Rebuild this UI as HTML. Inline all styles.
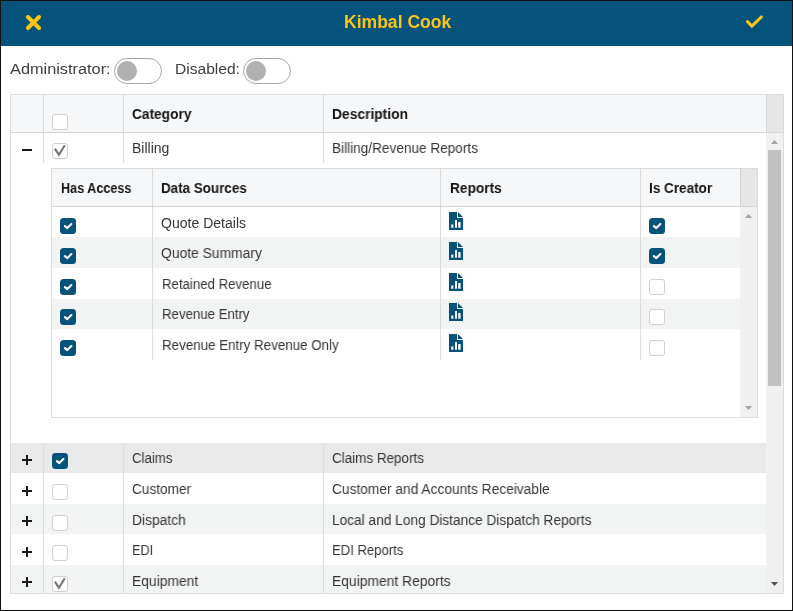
<!DOCTYPE html>
<html><head><meta charset="utf-8">
<style>
*{box-sizing:border-box;margin:0;padding:0}
html,body{width:793px;height:611px;overflow:hidden;background:#fff}
body{font-family:"Liberation Sans",sans-serif;color:#333;position:relative}
.a{position:absolute}
.t{position:absolute;white-space:nowrap;line-height:20px;height:20px;transform-origin:0 0;will-change:transform}
.tog{position:absolute;width:48px;height:26px;border:1px solid #a8a8a8;border-radius:13px;background:#fff}
.knob{position:absolute;left:2px;top:2px;width:20px;height:20px;border-radius:10px;background:#b1b1b1}
.cb{width:16px;height:16px;border:1px solid #d0d0d0;border-radius:3px;background:#fff}
.cbk{width:16px;height:16px;border-radius:3.5px;background:#05527a}
svg{display:block;position:absolute;left:0;top:0}
</style></head><body>
<div class="a" style="left:0px;top:0px;width:793px;height:611px;background:transparent;border:1px solid #111"></div>
<div class="a" style="left:1px;top:1px;width:791px;height:45px;background:#05527a;"></div>
<svg style="left:26px;top:15px" width="15" height="15" viewBox="0 0 15 15"><path d="M2 2L13 13M13 2L2 13" stroke="#fcc419" stroke-width="3.9" stroke-linecap="round"/></svg>
<svg style="left:745px;top:14px" width="19" height="16" viewBox="0 0 19 16"><path d="M2.5 7.6L6.9 12.1L16.3 3.0" stroke="#fcc419" stroke-width="3.1" stroke-linecap="round" fill="none"/></svg>
<div class="tog" style="left:114px;top:58px"><div class="knob"></div></div>
<div class="tog" style="left:243px;top:58px"><div class="knob"></div></div>
<div class="a" style="left:10px;top:94px;width:774px;height:500px;background:#fff;border:1px solid #dcdcdc"></div>
<div class="a" style="left:11px;top:95px;width:755px;height:37px;background:#f6f7f9;"></div>
<div class="a" style="left:767px;top:95px;width:16px;height:37px;background:#e7e6e7;"></div>
<div class="a" style="left:11px;top:132px;width:772px;height:1px;background:#d6d6d6;"></div>
<div class="a" style="left:43px;top:95px;width:1px;height:37px;background:#dcdcdc;"></div>
<div class="a" style="left:123px;top:95px;width:1px;height:37px;background:#dcdcdc;"></div>
<div class="a" style="left:323px;top:95px;width:1px;height:37px;background:#dcdcdc;"></div>
<div class="a" style="left:766px;top:95px;width:1px;height:37px;background:#d2d2d2;"></div>
<div class="a cb" style="left:52px;top:114px"></div>
<div class="a" style="left:766px;top:133px;width:17px;height:460px;background:#f0f0f0;"></div>
<svg style="left:771px;top:140px" width="7" height="4" viewBox="0 0 7 4"><path d="M0 4L3.5 0L7 4Z" fill="#a3a3a3"/></svg>
<div class="a" style="left:768px;top:150px;width:13px;height:236px;background:#c1c1c1;"></div>
<svg style="left:771px;top:582px" width="7" height="4" viewBox="0 0 7 4"><path d="M0 0L3.5 4L7 0Z" fill="#505050"/></svg>
<div class="a" style="left:43px;top:133px;width:1px;height:30px;background:#dcdcdc;"></div>
<div class="a" style="left:123px;top:133px;width:1px;height:30px;background:#dcdcdc;"></div>
<div class="a" style="left:323px;top:133px;width:1px;height:30px;background:#dcdcdc;"></div>
<div class="a" style="left:22px;top:149px;width:10px;height:2px;background:#1a1a1a;"></div>
<div class="a cb" style="left:52px;top:143px"><svg width="16" height="16" viewBox="0 0 16 16"><path d="M1.9 4.6L5.9 10.7L11.8 1.2" stroke="#767676" stroke-width="2.1" fill="none"/></svg></div>
<div class="a" style="left:51px;top:168px;width:707px;height:250px;background:#fff;border:1px solid #dcdcdc"></div>
<div class="a" style="left:52px;top:169px;width:689px;height:37px;background:#f6f7f9;"></div>
<div class="a" style="left:741px;top:169px;width:16px;height:37px;background:#e7e6e7;"></div>
<div class="a" style="left:52px;top:206px;width:705px;height:1px;background:#d6d6d6;"></div>
<div class="a" style="left:152px;top:169px;width:1px;height:37px;background:#dcdcdc;"></div>
<div class="a" style="left:440px;top:169px;width:1px;height:37px;background:#dcdcdc;"></div>
<div class="a" style="left:640px;top:169px;width:1px;height:37px;background:#dcdcdc;"></div>
<div class="a" style="left:740px;top:169px;width:1px;height:37px;background:#d2d2d2;"></div>
<div class="a" style="left:740px;top:207px;width:17px;height:210px;background:#f0f0f0;"></div>
<svg style="left:745px;top:214px" width="7" height="4" viewBox="0 0 7 4"><path d="M0 4L3.5 0L7 4Z" fill="#a3a3a3"/></svg>
<svg style="left:745px;top:406px" width="7" height="4" viewBox="0 0 7 4"><path d="M0 0L3.5 4L7 0Z" fill="#a3a3a3"/></svg>
<div class="a" style="left:52px;top:237px;width:688px;height:30.6px;background:#f2f3f3;"></div>
<div class="a" style="left:52px;top:298.7px;width:688px;height:30.3px;background:#f2f3f3;"></div>
<div class="a cbk" style="left:60px;top:218px"><svg width="16" height="16" viewBox="0 0 16 16"><path d="M4.9 8.1L7.3 10.1L11.4 6.0" stroke="#fff" stroke-width="2.1" fill="none" stroke-linecap="round" stroke-linejoin="round"/></svg></div>
<svg class="ic" style="left:449px;top:212px" width="14" height="18" viewBox="0 0 14 18"><path d="M0 0H8V6H14V18H0Z M2.2 12.4V15.8H4.4V12.4Z M6 8.1V15.8H8V8.1Z M9.2 10V15.8H11.6V10Z" fill="#05527a" fill-rule="evenodd"/><path d="M9 0L14 5H9Z" fill="#05527a"/></svg>
<div class="a cbk" style="left:649px;top:218px"><svg width="16" height="16" viewBox="0 0 16 16"><path d="M4.9 8.1L7.3 10.1L11.4 6.0" stroke="#fff" stroke-width="2.1" fill="none" stroke-linecap="round" stroke-linejoin="round"/></svg></div>
<div class="a cbk" style="left:60px;top:248px"><svg width="16" height="16" viewBox="0 0 16 16"><path d="M4.9 8.1L7.3 10.1L11.4 6.0" stroke="#fff" stroke-width="2.1" fill="none" stroke-linecap="round" stroke-linejoin="round"/></svg></div>
<svg class="ic" style="left:449px;top:242px" width="14" height="18" viewBox="0 0 14 18"><path d="M0 0H8V6H14V18H0Z M2.2 12.4V15.8H4.4V12.4Z M6 8.1V15.8H8V8.1Z M9.2 10V15.8H11.6V10Z" fill="#05527a" fill-rule="evenodd"/><path d="M9 0L14 5H9Z" fill="#05527a"/></svg>
<div class="a cbk" style="left:649px;top:248px"><svg width="16" height="16" viewBox="0 0 16 16"><path d="M4.9 8.1L7.3 10.1L11.4 6.0" stroke="#fff" stroke-width="2.1" fill="none" stroke-linecap="round" stroke-linejoin="round"/></svg></div>
<div class="a cbk" style="left:60px;top:279px"><svg width="16" height="16" viewBox="0 0 16 16"><path d="M4.9 8.1L7.3 10.1L11.4 6.0" stroke="#fff" stroke-width="2.1" fill="none" stroke-linecap="round" stroke-linejoin="round"/></svg></div>
<svg class="ic" style="left:449px;top:273px" width="14" height="18" viewBox="0 0 14 18"><path d="M0 0H8V6H14V18H0Z M2.2 12.4V15.8H4.4V12.4Z M6 8.1V15.8H8V8.1Z M9.2 10V15.8H11.6V10Z" fill="#05527a" fill-rule="evenodd"/><path d="M9 0L14 5H9Z" fill="#05527a"/></svg>
<div class="a cb" style="left:649px;top:279px"></div>
<div class="a cbk" style="left:60px;top:309px"><svg width="16" height="16" viewBox="0 0 16 16"><path d="M4.9 8.1L7.3 10.1L11.4 6.0" stroke="#fff" stroke-width="2.1" fill="none" stroke-linecap="round" stroke-linejoin="round"/></svg></div>
<svg class="ic" style="left:449px;top:303px" width="14" height="18" viewBox="0 0 14 18"><path d="M0 0H8V6H14V18H0Z M2.2 12.4V15.8H4.4V12.4Z M6 8.1V15.8H8V8.1Z M9.2 10V15.8H11.6V10Z" fill="#05527a" fill-rule="evenodd"/><path d="M9 0L14 5H9Z" fill="#05527a"/></svg>
<div class="a cb" style="left:649px;top:309px"></div>
<div class="a cbk" style="left:60px;top:340px"><svg width="16" height="16" viewBox="0 0 16 16"><path d="M4.9 8.1L7.3 10.1L11.4 6.0" stroke="#fff" stroke-width="2.1" fill="none" stroke-linecap="round" stroke-linejoin="round"/></svg></div>
<svg class="ic" style="left:449px;top:334px" width="14" height="18" viewBox="0 0 14 18"><path d="M0 0H8V6H14V18H0Z M2.2 12.4V15.8H4.4V12.4Z M6 8.1V15.8H8V8.1Z M9.2 10V15.8H11.6V10Z" fill="#05527a" fill-rule="evenodd"/><path d="M9 0L14 5H9Z" fill="#05527a"/></svg>
<div class="a cb" style="left:649px;top:340px"></div>
<div class="a" style="left:152px;top:207px;width:1px;height:153px;background:#dcdcdc;"></div>
<div class="a" style="left:440px;top:207px;width:1px;height:153px;background:#dcdcdc;"></div>
<div class="a" style="left:640px;top:207px;width:1px;height:153px;background:#dcdcdc;"></div>
<div class="a" style="left:11px;top:443px;width:755px;height:30px;background:#e9e9e9;"></div>
<div class="a" style="left:11px;top:504px;width:755px;height:30px;background:#f2f3f3;"></div>
<div class="a" style="left:11px;top:565px;width:755px;height:28px;background:#f2f3f3;"></div>
<div class="a" style="left:22px;top:459px;width:10px;height:2px;background:#1a1a1a;"></div>
<div class="a" style="left:26px;top:455px;width:2px;height:10px;background:#1a1a1a;"></div>
<div class="a cbk" style="left:52px;top:453px"><svg width="16" height="16" viewBox="0 0 16 16"><path d="M4.9 8.1L7.3 10.1L11.4 6.0" stroke="#fff" stroke-width="2.1" fill="none" stroke-linecap="round" stroke-linejoin="round"/></svg></div>
<div class="a" style="left:22px;top:490px;width:10px;height:2px;background:#1a1a1a;"></div>
<div class="a" style="left:26px;top:486px;width:2px;height:10px;background:#1a1a1a;"></div>
<div class="a cb" style="left:52px;top:484px"></div>
<div class="a" style="left:22px;top:520px;width:10px;height:2px;background:#1a1a1a;"></div>
<div class="a" style="left:26px;top:516px;width:2px;height:10px;background:#1a1a1a;"></div>
<div class="a cb" style="left:52px;top:515px"></div>
<div class="a" style="left:22px;top:551px;width:10px;height:2px;background:#1a1a1a;"></div>
<div class="a" style="left:26px;top:547px;width:2px;height:10px;background:#1a1a1a;"></div>
<div class="a cb" style="left:52px;top:545px"></div>
<div class="a" style="left:22px;top:581px;width:10px;height:2px;background:#1a1a1a;"></div>
<div class="a" style="left:26px;top:577px;width:2px;height:10px;background:#1a1a1a;"></div>
<div class="a cb" style="left:52px;top:576px"><svg width="16" height="16" viewBox="0 0 16 16"><path d="M1.9 4.6L5.9 10.7L11.8 1.2" stroke="#767676" stroke-width="2.1" fill="none"/></svg></div>
<div class="a" style="left:43px;top:443px;width:1px;height:150px;background:#dcdcdc;"></div>
<div class="a" style="left:123px;top:443px;width:1px;height:150px;background:#dcdcdc;"></div>
<div class="a" style="left:323px;top:443px;width:1px;height:150px;background:#dcdcdc;"></div>
<div class="t" style="left:343.70px;top:12px;font-size:17.5px;font-weight:bold;color:#fcc419;transform:scaleX(1.0028)">Kimbal Cook</div>
<div class="t" style="left:10.05px;top:59px;font-size:15.5px;color:#404040;transform:scaleX(1.0527)">Administrator:</div>
<div class="t" style="left:174.60px;top:59px;font-size:15.5px;color:#404040;transform:scaleX(1.0048)">Disabled:</div>
<div class="t" style="left:132.12px;top:104px;font-size:14px;font-weight:bold;color:#141414;transform:scaleX(0.9783)">Category</div>
<div class="t" style="left:332.41px;top:104px;font-size:14px;font-weight:bold;color:#141414;transform:scaleX(0.9867)">Description</div>
<div class="t" style="left:132.20px;top:138px;font-size:14px;color:#363636;transform:scaleX(0.9972)">Billing</div>
<div class="t" style="left:332.43px;top:138px;font-size:14px;color:#363636;transform:scaleX(0.9718)">Billing/Revenue Reports</div>
<div class="t" style="left:60.70px;top:178px;font-size:14px;font-weight:bold;color:#141414;transform:scaleX(0.9013)">Has Access</div>
<div class="t" style="left:161.44px;top:178px;font-size:14px;font-weight:bold;color:#141414;transform:scaleX(0.9580)">Data Sources</div>
<div class="t" style="left:449.52px;top:178px;font-size:14px;font-weight:bold;color:#141414;transform:scaleX(0.9784)">Reports</div>
<div class="t" style="left:649.23px;top:178px;font-size:14px;font-weight:bold;color:#141414;transform:scaleX(0.9656)">Is Creator</div>
<div class="t" style="left:161.10px;top:213px;font-size:14px;color:#363636;transform:scaleX(1.0024)">Quote Details</div>
<div class="t" style="left:161.11px;top:243px;font-size:14px;color:#363636;transform:scaleX(0.9901)">Quote Summary</div>
<div class="t" style="left:161.66px;top:274px;font-size:14px;color:#363636;transform:scaleX(0.9443)">Retained Revenue</div>
<div class="t" style="left:161.65px;top:304px;font-size:14px;color:#363636;transform:scaleX(0.9451)">Revenue Entry</div>
<div class="t" style="left:161.65px;top:335px;font-size:14px;color:#363636;transform:scaleX(0.9538)">Revenue Entry Revenue Only</div>
<div class="t" style="left:132.15px;top:448px;font-size:14px;color:#363636;transform:scaleX(0.9463)">Claims</div>
<div class="t" style="left:332.14px;top:448px;font-size:14px;color:#363636;transform:scaleX(0.9606)">Claims Reports</div>
<div class="t" style="left:132.13px;top:479px;font-size:14px;color:#363636;transform:scaleX(0.9733)">Customer</div>
<div class="t" style="left:331.82px;top:479px;font-size:14px;color:#363636;transform:scaleX(0.9814)">Customer and Accounts Receivable</div>
<div class="t" style="left:132.11px;top:510px;font-size:14px;color:#363636;transform:scaleX(0.9868)">Dispatch</div>
<div class="t" style="left:332.12px;top:510px;font-size:14px;color:#363636;transform:scaleX(0.9777)">Local and Long Distance Dispatch Reports</div>
<div class="t" style="left:132.19px;top:540px;font-size:14px;color:#363636;transform:scaleX(0.9095)">EDI</div>
<div class="t" style="left:332.16px;top:540px;font-size:14px;color:#363636;transform:scaleX(0.9360)">EDI Reports</div>
<div class="t" style="left:132.11px;top:571px;font-size:14px;color:#363636;transform:scaleX(0.9894)">Equipment</div>
<div class="t" style="left:332.11px;top:571px;font-size:14px;color:#363636;transform:scaleX(0.9898)">Equipment Reports</div>
</body></html>
